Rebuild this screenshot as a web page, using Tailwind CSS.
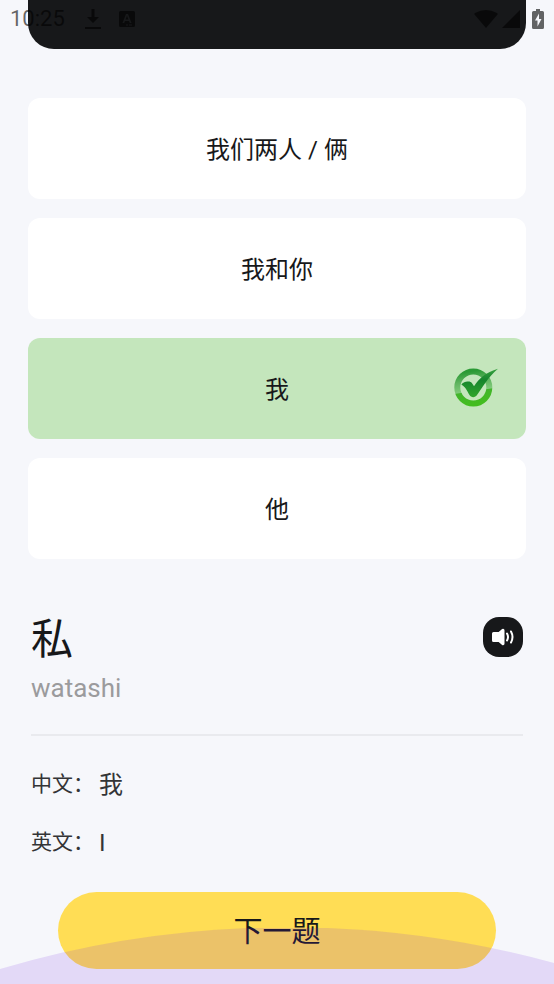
<!DOCTYPE html>
<html lang="zh-CN">
<head>
<meta charset="utf-8">
<meta name="viewport" content="width=device-width, initial-scale=1">
<title>单词测验</title>
<script src="https://cdn.jsdelivr.net/npm/@tailwindcss/browser@4"></script>
</head>
<body class="bg-[#f6f7fb] font-[Roboto,'Noto_Sans_CJK_SC',sans-serif] text-[#17181a]">
<div class="relative flex min-h-screen flex-col overflow-hidden">
  <!-- Status bar floats over the scrolled content -->
  <header class="absolute inset-x-0 top-0 z-20 flex h-[38px] items-center justify-between pr-[10px] pl-[10px] text-black/60">
    <div class="flex items-center">
      <time class="text-[22px] leading-9">10:25</time>
      <svg class="ml-5 h-5 w-4" viewBox="0 0 16 20" fill="currentColor" aria-hidden="true"><path d="M6.500 0h3v8H14l-6 6-6-6h4.500zM0 18h16v2H0z"/></svg>
      <svg class="ml-[18px] size-4" viewBox="0 0 16 16" fill="currentColor" fill-rule="evenodd" aria-hidden="true"><path d="M1.500 0h13Q16 0 16 1.500v13q0 1.500-1.500 1.500h-13Q0 16 0 14.500v-13Q0 0 1.500 0zM7 3 3.500 12h1.700l.8-2h4l.8 2h1.700L9 3zm1 1.800L9.400 8.500H6.600zM7 13.500v1h2v-1zm3 0v1h3v-1z"/></svg>
    </div>
    <div class="flex items-center">
      <svg class="h-[18px] w-6" viewBox="0 0 24 18" fill="currentColor" aria-hidden="true"><path d="M12 18 .5 4.500Q0 3.500 1 3 12-3 23 3q1 .5.500 1.500z"/></svg>
      <svg class="ml-1 size-[18px]" viewBox="0 0 18 18" fill="currentColor" aria-hidden="true"><path d="M18 0v18H0z"/></svg>
      <svg class="ml-3 h-5 w-3" viewBox="0 0 12 20" fill="currentColor" fill-rule="evenodd" aria-hidden="true"><path d="M4 0h4v2h2.500Q12 2 12 3.500v15q0 1.500-1.500 1.500h-9Q0 20 0 18.500v-15Q0 2 1.500 2H4zM7 4.500 3 11.500h2.500v6l4-7.500H7z"/></svg>
    </div>
  </header>

  <div class="mx-7 h-[49px] rounded-b-[26px] bg-[#17181a]"></div>

  <main class="flex flex-col">
    <div class="mx-7 mt-[49px] flex flex-col gap-[19px]">
      <button type="button" class="h-[101px] rounded-xl bg-white pt-[2px] text-2xl">我们两人 / 俩</button>
      <button type="button" class="h-[101px] rounded-xl bg-white pt-[2px] text-2xl">我和你</button>
      <button type="button" class="relative h-[101px] rounded-xl bg-[#c4e6bc] pt-[2px] text-2xl">我
        <svg class="absolute top-[30px] right-[28px] h-10 w-[45px]" viewBox="0 0 45 40" aria-hidden="true">
          <defs>
            <linearGradient id="ring" x1=".4" y1="0" x2=".55" y2="1"><stop offset="0" stop-color="#2b9a35"/><stop offset=".3" stop-color="#5fb45f"/><stop offset=".6" stop-color="#80ca79"/><stop offset=".63" stop-color="#42b52b"/><stop offset="1" stop-color="#43bd20"/></linearGradient>
            <linearGradient id="tick" x1="0" y1="0" x2="0" y2="1"><stop offset="0" stop-color="#37a040"/><stop offset=".4" stop-color="#16852c"/><stop offset="1" stop-color="#2fa52c"/></linearGradient>
          </defs>
          <circle cx="20.300" cy="19.500" r="16" fill="none" stroke="url(#ring)" stroke-width="6"/>
          <path d="M45 .8C39 2.500 34 5 29.500 8.500c-3.500 3-6 6-8.500 9.800-1.500-2.500-2.500-4.800-5.500-4.800-3.500 0-6.500 1.500-7 3.200 3.500 1.500 5.500 6 8 10.300 1.500 2.700 5.500 3 7.500 0C28.500 21 35 9 45 .8z" fill="url(#tick)"/>
        </svg>
      </button>
      <button type="button" class="h-[101px] rounded-xl bg-white pt-[2px] text-2xl">他</button>
    </div>

    <section class="mx-[31px] mt-12">
      <div class="flex items-start justify-between">
        <div>
          <h1 lang="ja" class="text-[42px] leading-[66px]">私</h1>
          <p class="text-[26px] leading-[30px] text-[#9b9b9d]">watashi</p>
        </div>
        <button type="button" aria-label="播放发音" class="mt-[10px] flex size-10 items-center justify-center rounded-[16px] bg-[#17181a] text-white">
          <svg class="h-[18px] w-[22px]" viewBox="0 0 22 18" fill="none" stroke="currentColor" stroke-width="2" stroke-linecap="round" aria-hidden="true"><path fill="currentColor" stroke-linejoin="round" d="M1.500 5H7l3.500-3q1-.5 1 .5v13q0 1-1 .5L7 13H1.500Q1 13 1 12.500v-7Q1 5 1.500 5z"/><path d="M15 5.500Q17 9 15 12.500M19 3.500Q22 9 19 14.500"/></svg>
        </button>
      </div>
      <hr class="mt-[31px] border-t-2 border-[#e9eaee]">
      <dl class="mt-[31px] flex flex-col gap-[22px] text-[#333436]">
        <div class="flex h-9 items-center"><dt class="w-[68px] text-[21px]">中文：</dt><dd class="text-2xl">我</dd></div>
        <div class="flex h-9 items-center"><dt class="w-[68px] text-[21px]">英文：</dt><dd class="text-2xl">I</dd></div>
      </dl>
    </section>

    <button type="button" class="mx-[58px] mt-[31px] mb-[15px] h-[77px] rounded-full bg-[#ffdd55] pt-1 text-[29px]">下一题</button>
  </main>

  <!-- Translucent hill over the lower edge -->
  <svg class="pointer-events-none absolute inset-x-0 bottom-0 z-10 h-14 w-full" viewBox="0 0 554 56" preserveAspectRatio="none" aria-hidden="true"><path d="M0 41A1010 1010 0 0 1 554 35V56H0z" fill="#7020e3" fill-opacity=".14"/></svg>
</div>
</body>
</html>
